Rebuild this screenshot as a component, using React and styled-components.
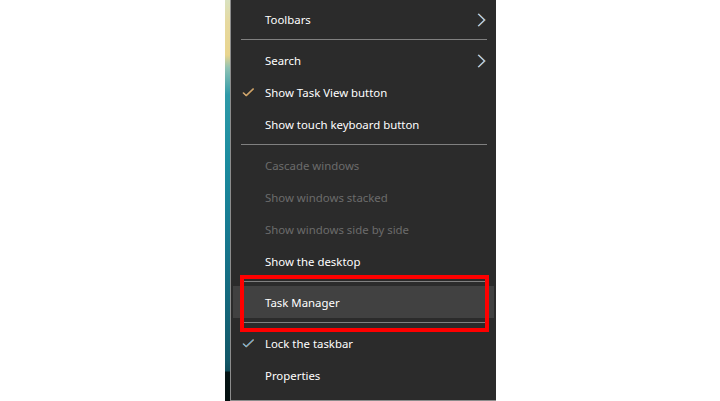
import React from "react";
import styled, { createGlobalStyle } from "styled-components";

const GlobalStyle = createGlobalStyle`
  html, body {
    margin: 0;
    padding: 0;
    background: #ffffff;
  }
`;

const Stage = styled.div`
  display: flex;
  width: 720px;
  height: 401px;
  overflow: hidden;
  background: #ffffff;
`;

const Gap = styled.div`
  width: 225px;
  flex-shrink: 0;
`;

const Wallpaper = styled.div`
  width: 5px;
  flex-shrink: 0;
  background: linear-gradient(
    to bottom,
    #d9e2c0 0px,
    #e6d9a0 22px,
    #e9d58e 55px,
    #8fc2b4 68px,
    #2f9aa8 95px,
    #1b8c9f 160px,
    #177a91 230px,
    #14687c 300px,
    #125868 360px,
    #0f4c5a 371px,
    #061515 372px,
    #041010 401px
  );
`;

const Menu = styled.div`
  width: 265px;
  flex-shrink: 0;
  background: #2b2b2b;
  border-left: 1px solid #8c8c8c;
  border-bottom: 1px solid #8c8c8c;
  padding-top: 3px;
  box-sizing: content-box;
  height: 397px;
  font-family: "Noto Sans", "Open Sans", sans-serif;
  font-size: 11.4px;
`;

const Row = styled.div`
  position: relative;
  display: flex;
  align-items: center;
  height: 32px;
  margin: 0 2px;
  padding-left: 32px;
  color: ${(p) => (p.$disabled ? "#6b6b6b" : "#ffffff")};
  background: ${(p) => (p.$active ? "#414141" : "transparent")};
`;

const Mark = styled.span`
  position: absolute;
  left: 9px;
  top: 12px;
  width: 12px;
  height: 9px;
  display: flex;
`;

const Chevron = styled.span`
  position: absolute;
  right: 8px;
  top: 10px;
  width: 9px;
  height: 14px;
  display: flex;
`;

const Separator = styled.div`
  height: 9px;
  display: flex;
  align-items: center;
  padding: 0 9px 0 10px;

  &::after {
    content: "";
    flex: 1;
    height: 1px;
    background: #808080;
  }
`;

const Callout = styled.div`
  position: absolute;
  left: 7px;
  right: 5px;
  top: -11px;
  bottom: -14px;
  border: 4px solid #ff0000;
  pointer-events: none;
`;

const Check = ({ warm }) => (
  <svg width="12" height="9" viewBox="0 0 12 9">
    <polyline
      points="0.8,4.6 3.9,7.6 11.2,0.6"
      fill="none"
      stroke="#e0a24f"
      strokeWidth="1.2"
      transform="translate(0.6,0)"
    />
    <polyline
      points="0.8,4.6 3.9,7.6 11.2,0.6"
      fill="none"
      stroke={warm ? "#c9a77a" : "#63b2ef"}
      strokeWidth="1.1"
    />
  </svg>
);

const Arrow = () => (
  <svg width="9" height="14" viewBox="0 0 9 14">
    <polyline
      points="1,0.8 7.4,7 1,13.2"
      fill="none"
      stroke="#e6b070"
      strokeWidth="1.1"
      transform="translate(0.6,0)"
    />
    <polyline
      points="1,0.8 7.4,7 1,13.2"
      fill="none"
      stroke="#9fcbf2"
      strokeWidth="1.1"
    />
  </svg>
);

const Item = ({ label, checked, warm, sub, disabled, active, children }) => (
  <Row $disabled={disabled} $active={active}>
    {checked && (
      <Mark>
        <Check warm={warm} />
      </Mark>
    )}
    {label}
    {sub && (
      <Chevron>
        <Arrow />
      </Chevron>
    )}
    {children}
  </Row>
);

const App = () => {
  return (
    <>
      <GlobalStyle />
      <Stage>
        <Gap />
        <Wallpaper />
        <Menu>
          <Item label="Toolbars" sub />
          <Separator />
          <Item label="Search" sub />
          <Item label="Show Task View button" checked warm />
          <Item label="Show touch keyboard button" />
          <Separator />
          <Item label="Cascade windows" disabled />
          <Item label="Show windows stacked" disabled />
          <Item label="Show windows side by side" disabled />
          <Item label="Show the desktop" />
          <Separator />
          <Item label="Task Manager" active>
            <Callout />
          </Item>
          <Separator />
          <Item label="Lock the taskbar" checked />
          <Item label="Properties" />
        </Menu>
      </Stage>
    </>
  );
};

export default App;
